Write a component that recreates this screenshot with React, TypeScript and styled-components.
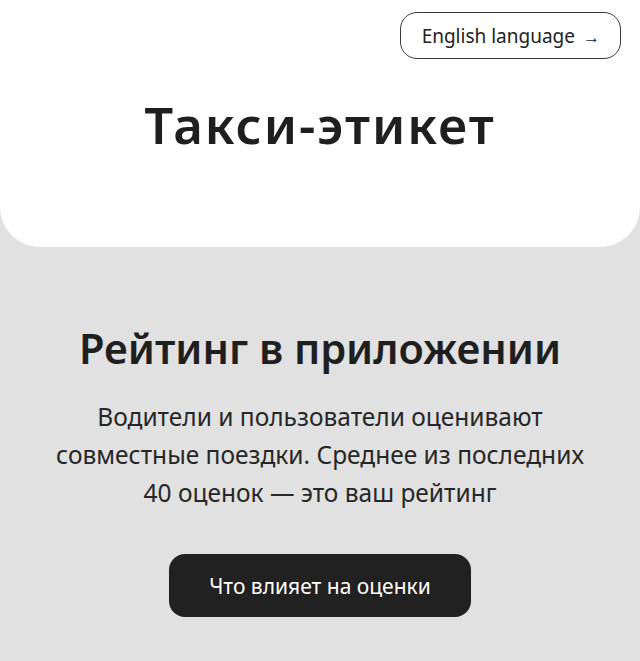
import React from "react";
import styled, { createGlobalStyle } from "styled-components";

const GlobalStyle = createGlobalStyle`
  html, body {
    margin: 0;
    padding: 0;
    background: #e1e1e1;
  }
  body {
    font-family: "Noto Sans", "Open Sans", Arial, sans-serif;
    color: #222;
  }
`;

const Page = styled.div`
  min-height: 661px;
  background: #e1e1e1;
  display: flex;
  flex-direction: column;
`;

const Hero = styled.header`
  background: #fff;
  height: 247px;
  box-sizing: border-box;
  border-radius: 0 0 40px 40px;
  padding: 12px 19px 0;
  display: flex;
  flex-direction: column;
`;

const TopBar = styled.div`
  display: flex;
  justify-content: flex-end;
`;

const LangButton = styled.a`
  display: inline-flex;
  align-items: center;
  gap: 8px;
  height: 47px;
  box-sizing: border-box;
  padding: 0 20px 0 21px;
  border: 1.5px solid #3a3a3a;
  border-radius: 17px;
  font-size: 19px;
  color: #222;
  text-decoration: none;
  cursor: pointer;
`;

const Arrow = styled.span`
  font-size: 17px;
  margin-top: 2px;
`;

const Title = styled.h1`
  margin: 30px 0 0;
  text-align: center;
  font-size: 51px;
  font-weight: 600;
  letter-spacing: 2px;
  color: #1f1f1f;
`;

const Section = styled.section`
  display: flex;
  flex-direction: column;
  align-items: center;
  padding: 76px 10px 0;
  text-align: center;
`;

const SectionTitle = styled.h2`
  margin: 0;
  font-size: 41.5px;
  line-height: 50px;
  font-weight: 600;
  color: #1f1f1f;
`;

const Lead = styled.p`
  margin: 25px 0 0;
  font-size: 24.5px;
  line-height: 38px;
  color: #272727;
`;

const ActionButton = styled.button`
  margin-top: 42px;
  width: 302px;
  height: 63px;
  border: none;
  border-radius: 16px;
  background: #212121;
  color: #fff;
  font-family: inherit;
  font-size: 21px;
  cursor: pointer;
`;

export default function App() {
  return (
    <Page>
      <GlobalStyle />
      <Hero>
        <TopBar>
          <LangButton>
            English language <Arrow>→</Arrow>
          </LangButton>
        </TopBar>
        <Title>Такси-этикет</Title>
      </Hero>
      <Section>
        <SectionTitle>Рейтинг в приложении</SectionTitle>
        <Lead>
          Водители и пользователи оценивают
          <br />
          совместные поездки. Среднее из последних
          <br />
          40 оценок — это ваш рейтинг
        </Lead>
        <ActionButton>Что влияет на оценки</ActionButton>
      </Section>
    </Page>
  );
}
